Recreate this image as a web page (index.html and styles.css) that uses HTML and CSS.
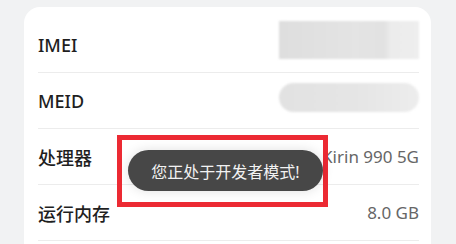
FILE: index.html
```html
<!DOCTYPE html>
<html lang="zh-CN">
<head>
<meta charset="utf-8">
<link rel="stylesheet" href="styles.css">
</head>
<body>
<div class="page">
  <div class="card">
    <div class="row">
      <span class="label">IMEI</span>
      <div class="blur blur-imei"></div>
    </div>
    <div class="row">
      <span class="label">MEID</span>
      <div class="blur blur-meid"></div>
    </div>
    <div class="row">
      <span class="label">处理器</span>
      <span class="value">Kirin 990 5G</span>
    </div>
    <div class="row">
      <span class="label">运行内存</span>
      <span class="value">8.0 GB</span>
    </div>
  </div>
</div>
<div class="highlight"></div>
<div class="toast">您正处于开发者模式!</div>
</body>
</html>
```
FILE: styles.css
```css
html, body {
  margin: 0;
  padding: 0;
  height: 100%;
  overflow: hidden;
}
body {
  background: #f1f2f3;
  font-family: "Noto Sans", "Noto Sans CJK SC", sans-serif;
  position: relative;
}
.page {
  padding: 7px 25px 0 24px;
}
.card {
  background: #ffffff;
  border-radius: 16px;
  padding: 10px 12px 30px 14px;
}
.row {
  display: flex;
  align-items: center;
  justify-content: space-between;
  height: 55px;
  border-bottom: 1px solid #ececec;
}
.label {
  font-size: 18px;
  font-weight: 500;
  color: #1f1f1f;
}
.value {
  font-size: 17px;
  color: #666666;
}
.blur {
  filter: blur(1px);
}
.blur-imei {
  width: 140px;
  height: 38px;
  margin-bottom: 9px;
  background: linear-gradient(90deg, #dedede 0%, #e4e4e4 55%, #e2e2e2 75%, #ececec 80%, #eeeeee 100%);
}
.blur-meid {
  width: 140px;
  height: 29px;
  margin-bottom: 7px;
  border-radius: 15px;
  background: linear-gradient(90deg, #e2e2e2 0%, #e6e6e6 60%, #ededed 100%);
}
.highlight {
  position: absolute;
  left: 117px;
  top: 135px;
  width: 201px;
  height: 62px;
  border: 5px solid #ec2a33;
}
.toast {
  position: absolute;
  left: 128px;
  top: 150px;
  width: 195px;
  height: 41px;
  border-radius: 21px;
  background: #474747;
  color: #f2f2f2;
  font-size: 16px;
  display: flex;
  align-items: center;
  justify-content: center;
  box-shadow: 0 0 12px rgba(0, 0, 0, 0.12);
}
```
